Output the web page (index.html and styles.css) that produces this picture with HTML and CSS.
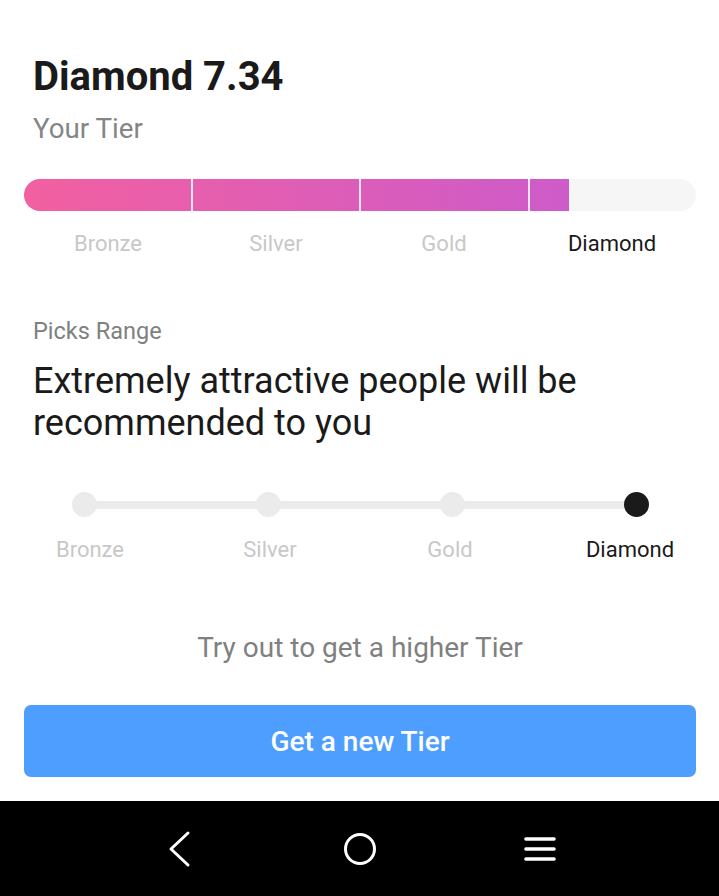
FILE: index.html
```html
<!DOCTYPE html>
<html>
<head>
<meta charset="utf-8">
<title>Your Tier</title>
<link rel="stylesheet" href="styles.css">
</head>
<body>
<div class="page">
	<div class="content">
		<h1 class="score">Diamond 7.34</h1>
		<div class="sub">Your Tier</div>

		<!-- tier bar -->
		<div class="bar">
			<div class="bar-fill" style="width: 545px;"></div>
			<div class="bar-seg"></div>
			<div class="bar-seg"></div>
			<div class="bar-seg"></div>
			<div class="bar-seg"></div>
		</div>
		<div class="bar-labels">
			<span>Bronze</span>
			<span>Silver</span>
			<span>Gold</span>
			<span class="on">Diamond</span>
		</div>

		<div class="range-title">Picks Range</div>
		<div class="range-text">Extremely attractive people will be recommended to you</div>

		<!-- picks range slider -->
		<div class="dots">
			<div class="dots-line"></div>
			<i></i><i></i><i></i><i class="on"></i>
		</div>
		<div class="dot-labels">
			<span>Bronze</span>
			<span>Silver</span>
			<span>Gold</span>
			<span class="on">Diamond</span>
		</div>

		<div class="hint">Try out to get a higher Tier</div>
		<div class="btn">Get a new Tier</div>
	</div>

	<div class="navbar">
		<svg width="40" height="40" viewBox="0 0 40 40"><path d="M28 4 L11 20 L28 36" fill="none" stroke="#fff" stroke-width="3" stroke-linecap="round" stroke-linejoin="round"/></svg>
		<svg width="40" height="40" viewBox="0 0 40 40"><circle cx="20" cy="20" r="14.5" fill="none" stroke="#fff" stroke-width="3"/></svg>
		<svg width="40" height="40" viewBox="0 0 40 40"><path d="M6 10 H34 M6 20 H34 M6 30 H34" fill="none" stroke="#fff" stroke-width="3.6" stroke-linecap="round"/></svg>
	</div>
</div>
</body>
</html>
```

FILE: styles.css
```css
*{box-sizing: border-box;}
html, body{margin: 0; padding: 0; background: #fff;}
body{font-family: Roboto, "Noto Sans", sans-serif; color: #1a1a1a;}

.page{
	width: 719px;
	height: 896px;
	display: flex;
	flex-direction: column;
}
.content{
	flex: 1;
	padding: 54px 23px 0 24px;
}

.score{
	margin: 0 0 0 9px;
	font-size: 40px;
	font-weight: 700;
	line-height: 46px;
}
.sub{
	margin: 13px 0 0 9px;
	font-size: 27.7px;
	line-height: 32px;
	color: #858585;
}

/* 段位条 */
.bar{
	position: relative;
	margin-top: 34px;
	height: 32px;
	border-radius: 16px;
	background: #f6f6f6;
	overflow: hidden;
	display: flex;
}
.bar-fill{
	position: absolute;
	left: 0; top: 0; bottom: 0;
	background: linear-gradient(90deg, #f260a0, #cd5bc9);
}
.bar-seg{
	position: relative;
	flex: 1;
	border-right: 2px solid rgba(255,255,255,.85);
}
.bar-seg:last-child{border-right: 0;}
.bar-labels{
	display: flex;
	margin-top: 19px;
}
.bar-labels span, .dot-labels span{
	flex: 1;
	text-align: center;
	font-size: 22px;
	line-height: 28px;
	color: #c8c8c8;
}
.bar-labels .on, .dot-labels .on{color: #1a1a1a;}

.range-title{
	margin: 58px 0 0 9px;
	font-size: 23.5px;
	line-height: 30px;
	color: #808080;
}
.range-text{
	margin: 14px 0 0 9px;
	font-size: 36px;
	line-height: 42px;
	color: #1a1a1a;
}

/* 滑块 */
.dots{
	position: relative;
	display: flex;
	justify-content: space-between;
	margin: 48px 47px 0 48px;
}
.dots-line{
	position: absolute;
	left: 12px; right: 12px; top: 9px;
	height: 8px;
	background: #ebebeb;
}
.dots i{
	position: relative;
	display: block;
	width: 25px;
	height: 25px;
	border-radius: 50%;
	background: #ebebeb;
}
.dots i.on{background: #1a1a1a;}
.dot-labels{
	display: flex;
	width: 720px;
	margin: 19px 0 0 -24px;
}
.dot-labels span{flex: none; width: 180px;}

.hint{
	margin-top: 67px;
	text-align: center;
	font-size: 28px;
	line-height: 34px;
	color: #808080;
}
.btn{
	margin-top: 40px;
	height: 72px;
	border-radius: 7px;
	background: #4d9eff;
	color: #fff;
	text-align: center;
	font-size: 28px;
	font-weight: 500;
	line-height: 74px;
}

/* 底部导航 */
.navbar{
	height: 95px;
	background: #000;
	display: flex;
	justify-content: center;
	align-items: center;
	gap: 140px;
}
```
